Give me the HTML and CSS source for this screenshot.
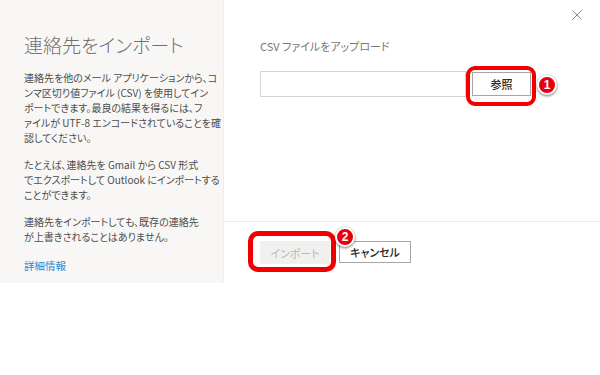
FILE: index.html
```html
<!DOCTYPE html>
<html lang="ja">
<head>
  <meta charset="UTF-8" />
  <meta name="viewport" content="width=device-width, initial-scale=1.0"/>
  <title>連絡先をインポート</title>
  <link rel="stylesheet" href="styles.css">
</head>
<body>

  <div class="dialog">
    <!-- Left info panel -->
    <div class="side">
      <h2>連絡先をインポート</h2>
      <p>連絡先を他のメール アプリケーションから、コ<br>ンマ区切り値ファイル (CSV) を使用してイン<br>ポートできます。最良の結果を得るには、フ<br>ァイルが UTF-8 エンコードされていることを確<br>認してください。</p>
      <p>たとえば、連絡先を Gmail から CSV 形式<br>でエクスポートして Outlook にインポートする<br>ことができます。</p>
      <p>連絡先をインポートしても、既存の連絡先<br>が上書きされることはありません。</p>
      <a href="#" class="more">詳細情報</a>
    </div>

    <!-- Upload panel -->
    <div class="main">
      <div class="main-top">
        <div class="top-bar">
          <button class="close" title="閉じる">
            <svg width="10" height="10" viewBox="0 0 10 10"><path d="M0.5 0.5 L9.5 9.5 M9.5 0.5 L0.5 9.5" stroke="#8a8a8a" stroke-width="1" fill="none"/></svg>
          </button>
        </div>
        <div class="label">CSV ファイルをアップロード</div>
        <div class="upload-row">
          <input type="text" class="file-input">
          <span class="mark">
            <button class="btn browse">参照</button>
            <span class="ring ring-1"></span>
            <span class="badge badge-1">1</span>
          </span>
        </div>
      </div>

      <div class="footer">
        <span class="mark">
          <button class="btn import" disabled>インポート</button>
          <span class="ring ring-2"></span>
          <span class="badge badge-2">2</span>
        </span>
        <button class="btn cancel">キャンセル</button>
      </div>
    </div>
  </div>

</body>
</html>
```

FILE: styles.css
```css
body {
  font-family: "Noto Sans CJK JP", "Noto Sans", sans-serif;
  margin: 0;
  padding: 0;
  background-color: #ffffff;
  color: #444444;
}

.dialog {
  display: flex;
  height: 283px;
}

/* Left panel */
.side {
  width: 224px;
  box-sizing: border-box;
  padding: 34px 0 0 24px;
  background-color: #f8f7f6;
  border-right: 1px solid #efeeec;
  font-feature-settings: "palt";
}

.side h2 {
  margin: 0 0 14px;
  font-size: 19px;
  line-height: 22px;
  font-weight: 300;
  color: #707070;
}

.side p {
  margin: 0 0 12px;
  font-size: 10px;
  line-height: 15px;
  color: #4d4d4d;
  white-space: nowrap;
}

.more {
  display: block;
  margin-top: 14px;
  font-size: 10.5px;
  line-height: 15px;
  color: #2b88d8;
  text-decoration: none;
}

/* Right panel */
.main {
  flex: 1;
  display: flex;
  flex-direction: column;
}

.main-top {
  height: 222px;
  box-sizing: border-box;
  padding-left: 36px;
  border-bottom: 1px solid #eaeaea;
}

.top-bar {
  display: flex;
  justify-content: flex-end;
  padding: 10px 18px 0 0;
}

.close {
  width: 10px;
  height: 10px;
  padding: 0;
  border: none;
  background: none;
  display: flex;
}

.label {
  margin-top: 19px;
  font-size: 11px;
  line-height: 14px;
  color: #777777;
  font-feature-settings: "palt";
}

.upload-row {
  display: flex;
  align-items: center;
  gap: 6px;
  margin-top: 18px;
}

.file-input {
  width: 206px;
  height: 26px;
  box-sizing: border-box;
  border: 1px solid #d4d4d4;
  margin: 0;
  padding: 0 6px;
}

.btn {
  font-family: "Noto Sans CJK JP", sans-serif;
  font-size: 11px;
  font-weight: 500;
  color: #262626;
  background-color: #ffffff;
  border: 1px solid #a6a6a6;
  box-sizing: border-box;
  margin: 0;
  padding: 0;
  font-feature-settings: "palt";
}

.browse {
  width: 59px;
  height: 24px;
}

.footer {
  display: flex;
  align-items: flex-start;
  gap: 9px;
  padding: 19px 0 0 36px;
}

.import {
  width: 70px;
  height: 23px;
  border-color: #f1f0ef;
  background-color: #f1f0ef;
  color: #b8b8b8;
  font-weight: normal;
}

.cancel {
  width: 72px;
  height: 22px;
}

/* Annotation marks */
.mark {
  position: relative;
  display: inline-flex;
}

.ring {
  position: absolute;
  border: 4px solid #f20000;
  border-radius: 9px;
}

.ring-1 {
  top: -6px;
  left: -6px;
  right: -5px;
  bottom: -10px;
}

.ring-2 {
  top: -10px;
  left: -12px;
  right: -6px;
  bottom: -8px;
  border-width: 5px;
  border-radius: 10px;
}

.badge {
  position: absolute;
  width: 20px;
  height: 20px;
  box-sizing: border-box;
  border: 2px solid #ffffff;
  border-radius: 50%;
  background-color: #e8000f;
  box-shadow: 0 1px 3px rgba(0, 0, 0, 0.55);
  color: #ffffff;
  font-family: "Liberation Sans", sans-serif;
  font-size: 12px;
  font-weight: bold;
  line-height: 16px;
  text-align: center;
}

.badge-1 {
  left: 65px;
  top: 3px;
}

.badge-2 {
  left: 75px;
  top: -14px;
}
```
